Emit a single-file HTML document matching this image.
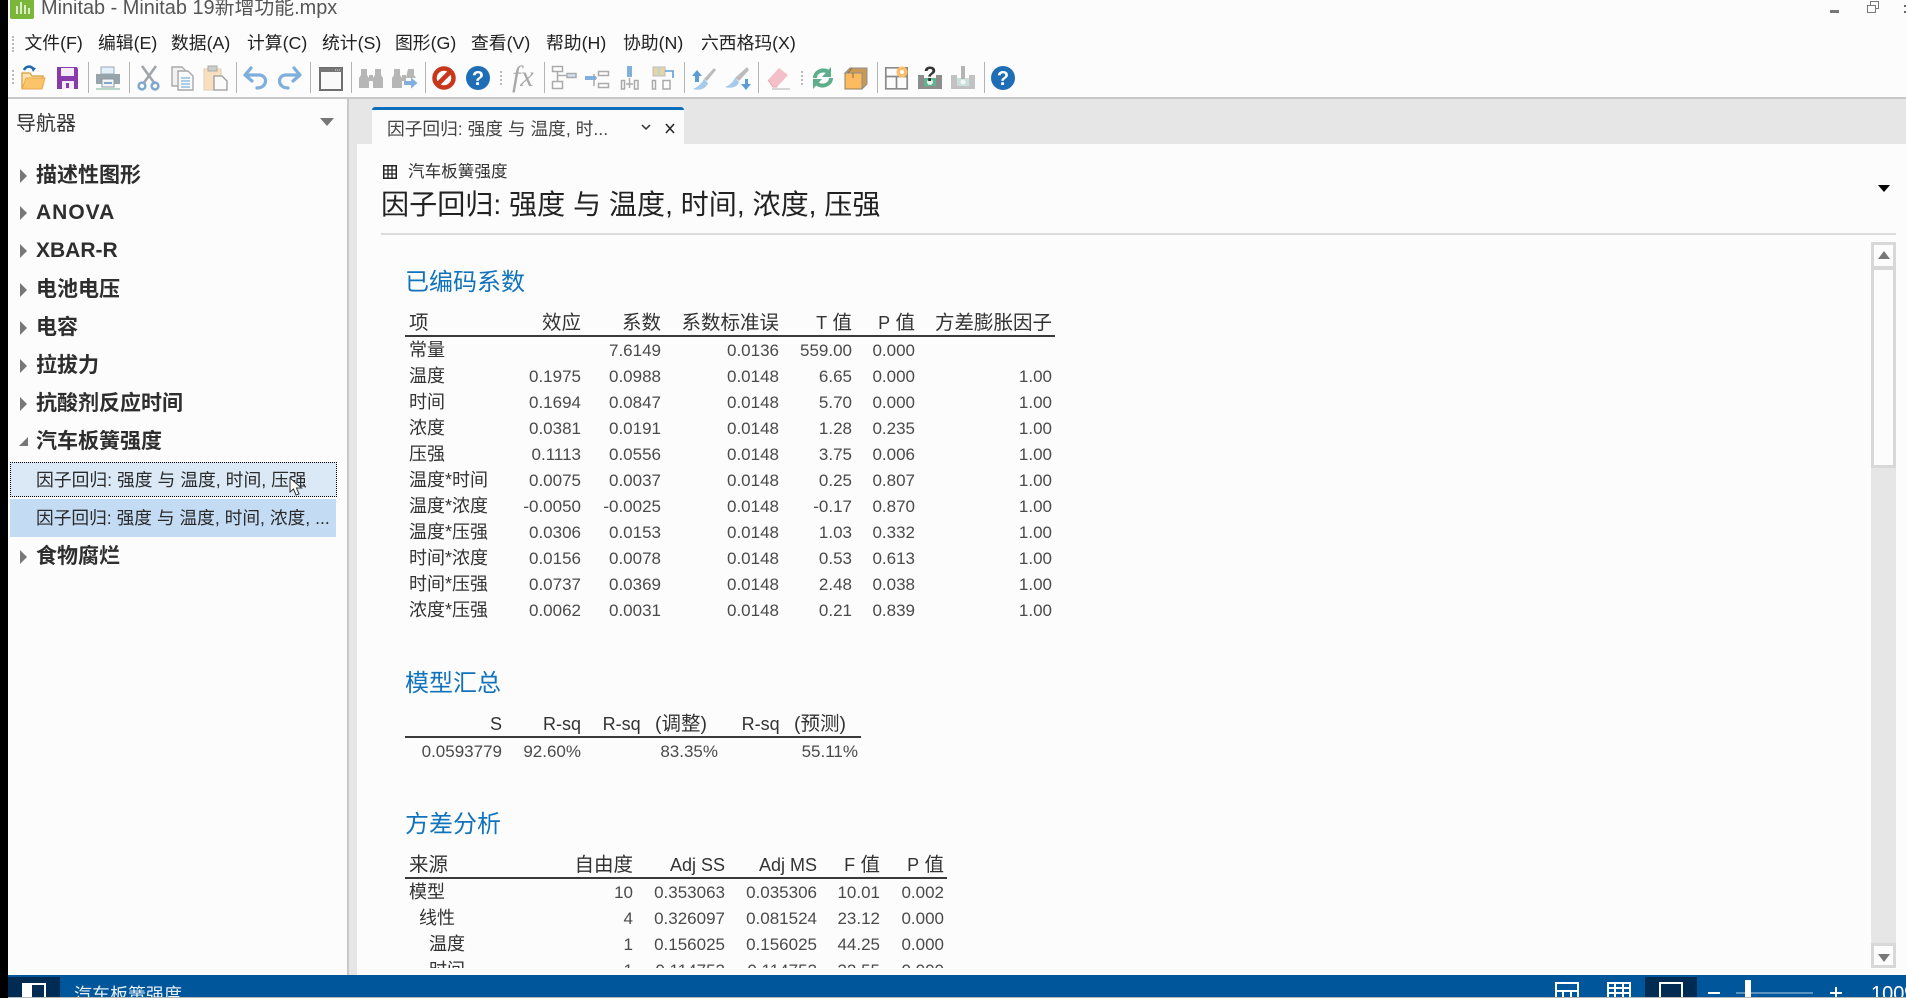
<!DOCTYPE html>
<html lang="zh"><head><meta charset="utf-8"><title>Minitab</title>
<style>
*{box-sizing:border-box}
html,body{margin:0;padding:0;width:1906px;height:998px;overflow:hidden;background:#fcfcfc}
body{position:relative;font-family:"Liberation Sans","Noto Sans CJK SC",sans-serif;color:#333}
.a{position:absolute;white-space:nowrap}
.m{position:absolute;top:30px;line-height:26px;font-size:17.8px;color:#222;white-space:nowrap}
.t{position:absolute;left:36px;font-size:21px;font-weight:bold;line-height:30px;color:#2e2e2e;white-space:nowrap}
.s{position:absolute;left:36px;font-size:17.8px;line-height:26px;color:#2a2a2a;white-space:nowrap}
.tri{position:absolute;left:20px;width:0;height:0;border-left:7px solid #777;border-top:7px solid transparent;border-bottom:7px solid transparent}
h2{position:absolute;left:405px;margin:0;font-size:24px;font-weight:normal;line-height:30px;color:#1173bb;white-space:nowrap}
table{position:absolute;left:405px;border-collapse:collapse;table-layout:fixed}
th{font-weight:normal;font-size:19.5px;height:26px;line-height:24px;padding:2px 3px 0;text-align:right;color:#333;border-bottom:2px solid #3a3a3a;white-space:nowrap}
td{font-size:17px;height:26px;line-height:25px;padding:1px 3px 0;text-align:right;color:#4a4a4a;white-space:nowrap}
th:first-child,td:first-child{text-align:left;padding-left:4px}
td:first-child{font-size:18px;color:#333}
th i{font-style:normal;font-size:18px}
th u{text-decoration:none;display:inline-block;width:9px}
</style></head><body>

<!-- left black edge -->
<div class="a" style="left:0;top:0;width:8px;height:998px;background:#000;z-index:5"></div>

<!-- title -->
<div class="a" style="left:10px;top:0;width:24px;height:19px;background:#7ab639;border-radius:0 0 2px 2px"></div>
<div class="a" style="left:16px;top:6px;width:2px;height:8px;background:#dcecc8"></div>
<div class="a" style="left:20px;top:2px;width:2px;height:12px;background:#dcecc8"></div>
<div class="a" style="left:24px;top:5px;width:2px;height:9px;background:#dcecc8"></div>
<div class="a" style="left:28px;top:8px;width:2px;height:6px;background:#dcecc8"></div>
<div class="a" style="left:41px;top:-5px;font-size:19.9px;line-height:26px;color:#555">Minitab - Minitab 19新增功能.mpx</div>
<div class="a" style="left:1830px;top:10px;width:9px;height:3px;background:#777"></div>
<div class="a" style="left:1867px;top:5px;width:9px;height:8px;border:1.5px solid #777;background:#fcfcfc;z-index:2"></div>
<div class="a" style="left:1870px;top:1px;width:9px;height:8px;border:1.5px solid #777"></div>
<div class="a" style="left:1904px;top:5px;width:2px;height:2px;background:#666"></div>
<div class="a" style="left:1904px;top:11px;width:2px;height:2px;background:#666"></div>

<!-- menu -->
<div class="a" style="left:12px;top:36px;width:2px;height:16px;border-left:2px dotted #bbb"></div>
<div class="m" style="left:24.5px">文件(F)</div>
<div class="m" style="left:98px">编辑(E)</div>
<div class="m" style="left:171px">数据(A)</div>
<div class="m" style="left:247px">计算(C)</div>
<div class="m" style="left:322px">统计(S)</div>
<div class="m" style="left:395px">图形(G)</div>
<div class="m" style="left:471px">查看(V)</div>
<div class="m" style="left:546px">帮助(H)</div>
<div class="m" style="left:623px">协助(N)</div>
<div class="m" style="left:701px">六西格玛(X)</div>

<!-- toolbar -->
<svg class="a" style="left:0;top:0" width="1906" height="98" viewBox="0 0 1906 98">
<g stroke="#b4b4b4" stroke-width="1">
<path d="M88.5 62V93M129.5 62V93M236.5 62V93M310.5 62V93M351.5 62V93M425.5 62V93M544.5 62V93M684.5 62V93M758.5 62V93M877.5 62V93M984.5 62V93"/></g>
<g stroke="#bbb" stroke-width="2" stroke-dasharray="2 2"><path d="M13 70V86M501 71V85M802 71V85"/></g>

<!-- open -->
<g transform="translate(21,65)"><path d="M1 24V8h8l2 3h11v3" fill="#fde3ad" stroke="#d49a3c" stroke-width="1.2"/><path d="M1 24l4-11h19l-3 11z" fill="#fcc468" stroke="#e8a94c"/><path d="M3 5C5 1 10 0 13 5" fill="none" stroke="#2268ad" stroke-width="2.6"/><path d="M12 7l3-4-5-1z" fill="#2268ad"/></g>
<!-- save -->
<g transform="translate(56,66)"><path d="M1 1h20l1 2v20H1z" fill="#8a3bab"/><rect x="5" y="2" width="13" height="8" fill="#f4ecf7"/><rect x="6" y="15" width="12" height="8" fill="#f4ecf7"/><rect x="10" y="17" width="3" height="5" fill="#8a3bab"/></g>
<!-- print -->
<g transform="translate(96,66)"><rect x="5" y="1" width="13" height="7" fill="#e4eff8" stroke="#94a9bb"/><path d="M0 8h24v10H0z" fill="#98a4ac"/><rect x="6" y="13" width="12" height="8" fill="#f5f5f5" stroke="#8d9aa2"/><rect x="8" y="16" width="8" height="2" fill="#7aa8cf"/><path d="M0 23h24" stroke="#9cc9b5" stroke-width="1.4"/></g>
<!-- cut -->
<g transform="translate(137,65)" fill="none"><path d="M5 1l13 18M19 1L6 19" stroke="#a0a6ab" stroke-width="2.6"/><circle cx="5" cy="21" r="3.4" stroke="#7aa6cf" stroke-width="2.4"/><circle cx="18" cy="21" r="3.4" stroke="#7aa6cf" stroke-width="2.4"/></g>
<!-- copy -->
<g transform="translate(171,66)"><path d="M1 1h10l3 3v16H1z" fill="#f2f2f2" stroke="#a8a8a8" stroke-width="1.4"/><path d="M7 5h10l5 5v14H7z" fill="#fafafa" stroke="#a8a8a8" stroke-width="1.4"/><path d="M10 12h9M10 15h9M10 18h9M10 21h9" stroke="#8fbde0" stroke-width="1.4"/></g>
<!-- paste -->
<g transform="translate(203,65)"><rect x="1" y="4" width="17" height="21" fill="#f7dfbf" stroke="#e4cdae"/><rect x="5" y="1" width="9" height="5" fill="#ccc" stroke="#aaa"/><path d="M11 11h8l5 5v9H11z" fill="#fbfbfb" stroke="#9a9a9a" stroke-width="1.3"/></g>
<!-- undo / redo -->
<g fill="none" stroke="#7eaedb" stroke-width="3.2" stroke-linecap="round" stroke-linejoin="round">
<path d="M251 68L245 75L252 81M246 75H259C268 75 268 88 257 88"/>
<path d="M294 68L300 75L293 81M299 75H286C277 75 277 88 288 88"/></g>
<!-- window -->
<g transform="translate(319,67)"><rect x="1" y="1" width="22" height="22" fill="#fafafa" stroke="#6e6e6e" stroke-width="2"/><rect x="1" y="1" width="22" height="4" fill="#777"/><path d="M16 3h1M18 3h1M20 3h1" stroke="#ddd"/></g>
<!-- binoculars -->
<g fill="#b6b6b6">
<path d="M361 69h6v6l2 3v10h-10V78l2-3z"/>
<path d="M375 69h6v6l2 3v10h-10V78l2-3z"/>
<rect x="369" y="75" width="4" height="6"/>
<path d="M394 69h6v6l2 3v10h-10V78l2-3z"/>
<path d="M408 69h6v6l2 3H406z"/>
<rect x="402" y="75" width="4" height="6"/>
</g>
<path d="M404 81h7v-3.500l6.500 5.500-6.500 5.500v-3.500h-7z" fill="#82afdc"/>
<!-- stop -->
<g transform="translate(432,66)"><circle cx="12" cy="12" r="9.500" fill="#fbfbfb" stroke="#c8361c" stroke-width="4.500"/><path d="M6 18L18 6" stroke="#c8361c" stroke-width="4.500"/></g>
<!-- help -->
<circle cx="478" cy="78" r="12" fill="#1f6db5"/>
<text x="478" y="85" text-anchor="middle" font-family="Liberation Sans" font-weight="bold" font-size="20" fill="#fff">?</text>
<!-- fx -->
<text x="512" y="86" font-family="Liberation Serif" font-style="italic" font-size="30" fill="#a8a8a8">fx</text>
<!-- tree icons -->
<g fill="#fcfcfc" stroke="#aaa" stroke-width="1.500">
<rect x="552.500" y="66.500" width="10" height="5"/><rect x="552.500" y="81.500" width="10" height="7"/><rect x="567" y="73.500" width="9" height="4" fill="#cfe2f2"/>
<path d="M557.500 72V81M558 75.500H566" fill="none"/>
<rect x="598.500" y="71.500" width="10" height="4"/><rect x="598.500" y="83.500" width="10" height="4"/><path d="M594 74V86M597 78H591" fill="none"/>
<rect x="621.500" y="80.500" width="3" height="8.500"/><rect x="634.500" y="80.500" width="3.500" height="8.500"/><path d="M629.500 78V88M626 84H633" fill="none"/>
<rect x="652.500" y="80.500" width="3" height="8.500"/><rect x="663" y="80.500" width="7" height="8.500"/>
</g>
<rect x="585" y="76" width="11" height="4" fill="#82afdc"/>
<rect x="627" y="66" width="5" height="11" fill="#82afdc"/>
<rect x="653" y="67" width="12" height="9" fill="#e8d3a6" stroke="#bbb"/>
<path d="M659 67v9" stroke="#b9d8c8" stroke-width="2.500"/>
<path d="M665 71h8v7" fill="none" stroke="#5e9fd6" stroke-width="1.600"/>
<!-- brush arrows -->
<path d="M697 70l5 6h-3v6h-4v-6h-3z" fill="#5b9cd6"/>
<path d="M704 79L714 68l2 2-9 11z" fill="#bcbcbc"/>
<path d="M704 79c-2 4-6 8-11 10 6 2 13 0 15-6z" fill="#a4cbea"/>
<path d="M745 79h3v5h3l-5 6-5-6h4z" fill="#5b9cd6"/>
<path d="M735 78L747 67l2 3-10 11z" fill="#bcbcbc"/>
<path d="M735 78c-2 4-5 7-10 9 6 2 13 0 14-5z" fill="#a4cbea"/>
<!-- eraser -->
<g transform="translate(766,66)"><path d="M2 14L13 2l9 7-11 12H7z" fill="#f3bfc9"/><path d="M2 14l5 7h4" fill="none" stroke="#e3a4b1"/><path d="M6 23h18" stroke="#c8c8c8" stroke-width="1.500"/></g>
<!-- refresh -->
<g transform="translate(811,66)" fill="none" stroke="#5dae8a" stroke-width="4"><path d="M4 12C4 5 13 2 19 7"/><path d="M20 12c0 7-9 10-15 5"/></g>
<path d="M831 67v10h-9z" fill="#5dae8a"/><path d="M813 89V79h9z" fill="#5dae8a"/>
<!-- box -->
<g transform="translate(844,66)"><path d="M1 7h17v16H1z" fill="#fbbb5e" stroke="#8f8060"/><path d="M1 7l5-5h17v16l-5 5V7z" fill="#c99a56" stroke="#8e8e8e"/><path d="M8 2l-4 5M9 7V12" stroke="#8a6a3a"/></g>
<!-- table+sun -->
<g fill="none" stroke="#8a8a8a" stroke-width="1.700"><path d="M885.800 67.800H907.200V88.800H885.800ZM885.800 76.500H907.200M896.500 76.500V88.800"/></g>
<circle cx="902" cy="72" r="5.500" fill="#fbbd6a"/><circle cx="902" cy="72" r="2" fill="#fff"/>
<!-- ? tool -->
<path d="M918 75h6v11h12V75h6v14h-24z" fill="#8d8d8d"/>
<rect x="924" y="78" width="12" height="8" fill="#5fb38f"/><circle cx="930" cy="82" r="3" fill="#eaf5ef"/>
<text x="930" y="81" text-anchor="middle" font-family="Liberation Sans" font-weight="bold" font-size="21" fill="#333">?</text>
<!-- ! tool -->
<path d="M951 75h6v11h12V75h6v14h-24z" fill="#c2c2c2"/>
<rect x="957" y="78" width="12" height="8" fill="#cbe0dc"/><rect x="961" y="66" width="4" height="13" fill="#b4b4b4"/><circle cx="963" cy="82" r="2.500" fill="#f2f7f5"/>
<!-- help 2 -->
<circle cx="1003" cy="78" r="12" fill="#1f6db5"/>
<text x="1003" y="85" text-anchor="middle" font-family="Liberation Sans" font-weight="bold" font-size="20" fill="#fff">?</text>
</svg>
<div class="a" style="left:8px;top:97px;width:1898px;height:1.500px;background:#c8c8c8"></div>

<!-- grey band / tab bar -->
<div class="a" style="left:347px;top:99px;width:1559px;height:45px;background:#e6e6e6"></div>
<div class="a" style="left:347px;top:99px;width:10px;height:876px;background:#e6e6e6"></div>
<div class="a" style="left:347px;top:99px;width:2px;height:876px;background:#c8c8c8"></div>
<div class="a" style="left:372px;top:107px;width:312px;height:38px;background:#fcfcfc;border-top:3px solid #0a6ebd;border-radius:3px 3px 0 0"></div>
<div class="a" style="left:387px;top:116px;font-size:17.7px;line-height:26px;color:#444">因子回归: 强度 与 温度, 时...</div>
<svg class="a" style="left:640px;top:120px" width="40" height="18" viewBox="0 0 40 18"><path d="M2 5l4 4 4-4" fill="none" stroke="#333" stroke-width="1.500"/><path d="M26 4l8 9M34 4l-8 9" stroke="#222" stroke-width="1.500"/></svg>

<!-- navigator -->
<div class="a" style="left:16px;top:109px;font-size:20px;line-height:30px;color:#333">导航器</div>
<div class="a" style="left:320px;top:118px;width:0;height:0;border-left:7px solid transparent;border-right:7px solid transparent;border-top:8px solid #777"></div>

<div class="tri" style="top:169px"></div><div class="t" style="top:161px">描述性图形</div>
<div class="tri" style="top:206px"></div><div class="t" style="top:198px;letter-spacing:1px">ANOVA</div>
<div class="tri" style="top:244px"></div><div class="t" style="top:236px">XBAR-R</div>
<div class="tri" style="top:283px"></div><div class="t" style="top:275px">电池电压</div>
<div class="tri" style="top:321px"></div><div class="t" style="top:313px">电容</div>
<div class="tri" style="top:359px"></div><div class="t" style="top:351px">拉拔力</div>
<div class="tri" style="top:397px"></div><div class="t" style="top:389px">抗酸剂反应时间</div>
<div class="a" style="left:19px;top:437px;width:0;height:0;border-right:9px solid #777;border-top:9px solid transparent"></div>
<div class="t" style="top:427px">汽车板簧强度</div>
<div class="a" style="left:10px;top:462px;width:327px;height:35px;background:#dbe9f6;border:1px dotted #000"></div>
<div class="s" style="top:467px">因子回归: 强度 与 温度, 时间, 压强</div>
<div class="a" style="left:10px;top:499px;width:326px;height:38px;background:#c3dbf3"></div>
<div class="s" style="top:505px;font-size:17.7px">因子回归: 强度 与 温度, 时间, 浓度, ...</div>
<div class="tri" style="top:550px"></div><div class="t" style="top:542px">食物腐烂</div>
<svg class="a" style="left:289px;top:477px" width="14" height="19" viewBox="0 0 14 19"><path d="M1 1v14l3.500-3 2.500 6 3-1-2.500-6h5z" fill="#fff" stroke="#333"/></svg>

<!-- document header -->
<svg class="a" style="left:383px;top:165px" width="14" height="14" viewBox="0 0 14 14"><rect x="0.750" y="0.750" width="12.500" height="12.500" fill="#fff" stroke="#222" stroke-width="1.500"/><path d="M0 5h14M0 9h14M5 0v14M9 0v14" stroke="#222" stroke-width="1.300"/></svg>
<div class="a" style="left:408px;top:159px;font-size:16.600px;line-height:26px;color:#333">汽车板簧强度</div>
<div class="a" style="left:381px;top:185px;font-size:28.100px;line-height:39px;color:#222">因子回归: 强度 与 温度, 时间, 浓度, 压强</div>
<div class="a" style="left:1878px;top:185px;width:0;height:0;border-left:6px solid transparent;border-right:6px solid transparent;border-top:7px solid #000"></div>
<div class="a" style="left:381px;top:233px;width:1515px;height:2px;background:#dcdcdc"></div>

<!-- report -->
<div class="a" style="left:0;top:0;width:1870px;height:968px;overflow:hidden">
<h2 style="top:268px">已编码系数</h2>
<table style="top:309px;width:650px">
<colgroup><col style="width:100px"><col style="width:79px"><col style="width:80px"><col style="width:118px"><col style="width:73px"><col style="width:63px"><col style="width:137px"></colgroup>
<tr><th>项</th><th>效应</th><th>系数</th><th>系数标准误</th><th><i>T</i> 值</th><th><i>P</i> 值</th><th>方差膨胀因子</th></tr>
<tr><td>常量</td><td></td><td>7.6149</td><td>0.0136</td><td>559.00</td><td>0.000</td><td></td></tr>
<tr><td>温度</td><td>0.1975</td><td>0.0988</td><td>0.0148</td><td>6.65</td><td>0.000</td><td>1.00</td></tr>
<tr><td>时间</td><td>0.1694</td><td>0.0847</td><td>0.0148</td><td>5.70</td><td>0.000</td><td>1.00</td></tr>
<tr><td>浓度</td><td>0.0381</td><td>0.0191</td><td>0.0148</td><td>1.28</td><td>0.235</td><td>1.00</td></tr>
<tr><td>压强</td><td>0.1113</td><td>0.0556</td><td>0.0148</td><td>3.75</td><td>0.006</td><td>1.00</td></tr>
<tr><td>温度*时间</td><td>0.0075</td><td>0.0037</td><td>0.0148</td><td>0.25</td><td>0.807</td><td>1.00</td></tr>
<tr><td>温度*浓度</td><td>-0.0050</td><td>-0.0025</td><td>0.0148</td><td>-0.17</td><td>0.870</td><td>1.00</td></tr>
<tr><td>温度*压强</td><td>0.0306</td><td>0.0153</td><td>0.0148</td><td>1.03</td><td>0.332</td><td>1.00</td></tr>
<tr><td>时间*浓度</td><td>0.0156</td><td>0.0078</td><td>0.0148</td><td>0.53</td><td>0.613</td><td>1.00</td></tr>
<tr><td>时间*压强</td><td>0.0737</td><td>0.0369</td><td>0.0148</td><td>2.48</td><td>0.038</td><td>1.00</td></tr>
<tr><td>浓度*压强</td><td>0.0062</td><td>0.0031</td><td>0.0148</td><td>0.21</td><td>0.839</td><td>1.00</td></tr>
</table>

<h2 style="top:669px">模型汇总</h2>
<table style="top:710px;width:456px">
<colgroup><col style="width:100px"><col style="width:79px"><col style="width:137px"><col style="width:140px"></colgroup>
<tr><th style="text-align:right"><i>S</i></th><th><i>R-sq</i></th><th style="padding-right:14px"><i>R-sq</i><u></u> (调整)</th><th style="padding-right:15px"><i>R-sq</i><u></u> (预测)</th></tr>
<tr><td style="text-align:right;font-size:17px;color:#4a4a4a;padding-right:3px">0.0593779</td><td>92.60%</td><td>83.35%</td><td>55.11%</td></tr>
</table>

<h2 style="top:810px">方差分析</h2>
<table style="top:851px;width:542px">
<colgroup><col style="width:139px"><col style="width:92px"><col style="width:92px"><col style="width:92px"><col style="width:63px"><col style="width:64px"></colgroup>
<tr><th>来源</th><th>自由度</th><th><i>Adj SS</i></th><th><i>Adj MS</i></th><th><i>F</i> 值</th><th><i>P</i> 值</th></tr>
<tr><td>模型</td><td>10</td><td>0.353063</td><td>0.035306</td><td>10.01</td><td>0.002</td></tr>
<tr><td style="padding-left:14px">线性</td><td>4</td><td>0.326097</td><td>0.081524</td><td>23.12</td><td>0.000</td></tr>
<tr><td style="padding-left:24px">温度</td><td>1</td><td>0.156025</td><td>0.156025</td><td>44.25</td><td>0.000</td></tr>
<tr><td style="padding-left:24px">时间</td><td>1</td><td>0.114752</td><td>0.114752</td><td>32.55</td><td>0.000</td></tr>
</table>
</div>

<!-- scrollbar -->
<div class="a" style="left:1871px;top:242px;width:25px;height:726px;background:#e6e6e6"></div>
<div class="a" style="left:1871px;top:242px;width:25px;height:27px;background:#fcfcfc;border:3px solid #d8d8d8"></div>
<div class="a" style="left:1871px;top:268px;width:25px;height:200px;background:#fcfcfc;border:3px solid #d8d8d8;border-top-width:2px"></div>
<div class="a" style="left:1871px;top:943px;width:25px;height:25px;background:#fcfcfc;border:3px solid #d8d8d8"></div>
<div class="a" style="left:1878px;top:251px;width:0;height:0;border-left:6.500px solid transparent;border-right:6.500px solid transparent;border-bottom:8px solid #777"></div>
<div class="a" style="left:1878px;top:954px;width:0;height:0;border-left:6.500px solid transparent;border-right:6.500px solid transparent;border-top:8px solid #777"></div>

<!-- status bar -->
<div class="a" style="left:8px;top:975px;width:1898px;height:22px;background:#00569a;overflow:hidden">
 <div class="a" style="left:0;top:2px;width:52px;height:20px;background:#002b52"></div>
 <div class="a" style="left:14px;top:8px;width:24px;height:14px;border:2px solid #fff;border-bottom:0"></div>
 <div class="a" style="left:14px;top:8px;width:10px;height:14px;background:#fff"></div>
 <div class="a" style="left:66px;top:7px;font-size:18px;line-height:26px;color:#e8f1f8">汽车板簧强度</div>
 <svg class="a" style="left:1540px;top:0" width="358" height="22" viewBox="1548 975 358 22">
  <g fill="none" stroke="#fff" stroke-width="2">
   <path d="M1556 997V983H1578V997M1556 991H1578M1563 991V997M1571 991V997"/>
   <path d="M1608 997V983H1630V997M1608 988H1630M1608 993H1630M1615 983V997M1623 983V997"/>
  </g>
  <rect x="1645" y="977" width="52" height="20" fill="#002b52"/>
  <path d="M1660 997V983H1682V997" fill="none" stroke="#fff" stroke-width="2"/>
  <path d="M1708 993H1720M1830 993H1842M1836 987V997" stroke="#fff" stroke-width="2"/>
  <path d="M1736 993H1813" stroke="#b8cfe2" stroke-width="1"/>
  <rect x="1745" y="980" width="6" height="17" fill="#fff"/>
  <text x="1871" y="1000" font-family="Liberation Sans" font-size="20" fill="#fff">100%</text>
 </svg>
</div>
<div class="a" style="left:8px;top:997px;width:1898px;height:1px;background:#b8b8b8"></div>
</body></html>
